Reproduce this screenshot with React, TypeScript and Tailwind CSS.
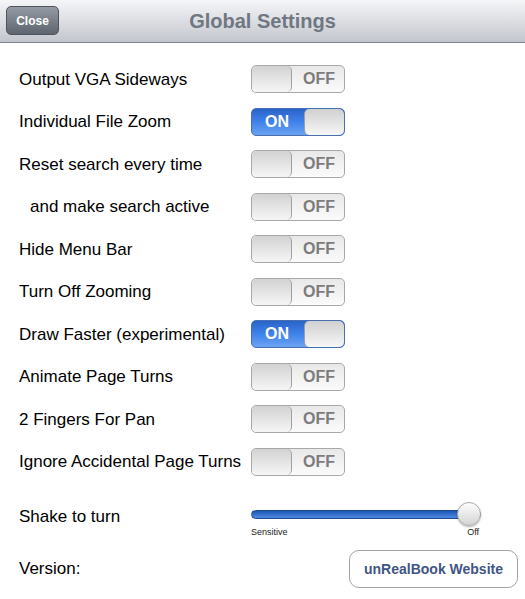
import React from 'react'

const font = { fontFamily: '"Liberation Sans", Arial, Helvetica, sans-serif' }

function Toggle({ on }: { on: boolean }) {
  if (on) {
    return (
      <div className="relative flex h-[28px] w-[94px] overflow-hidden rounded-[5px] border border-[#4a6fb0] bg-gradient-to-b from-[#2a63c8] via-[#3f82ea] to-[#6aa3f2]">
        <div className="flex flex-1 items-center justify-center pr-[2px] text-[16px] font-bold text-white">
          ON
        </div>
        <div className="h-full w-[40px] rounded-[5px] border-l border-[#9aa0a8] bg-gradient-to-b from-[#d0d0d0] to-[#f7f7f7]" />
      </div>
    )
  }
  return (
    <div className="relative flex h-[28px] w-[94px] overflow-hidden rounded-[5px] border border-[#a8a8a8] bg-gradient-to-b from-[#e8e8e8] to-[#fbfbfb]">
      <div className="h-full w-[40px] rounded-[5px] border-r border-[#a0a0a0] bg-gradient-to-b from-[#d2d2d2] to-[#f6f6f6]" />
      <div className="flex flex-1 items-center justify-center pl-[2px] text-[16px] font-bold text-[#7c7c7c]">
        OFF
      </div>
    </div>
  )
}

export default function App() {
  const rows = [
    { label: 'Output VGA Sideways', on: false },
    { label: 'Individual File Zoom', on: true },
    { label: 'Reset search every time', on: false },
    { label: 'and make search active', on: false, indent: true },
    { label: 'Hide Menu Bar', on: false },
    { label: 'Turn Off Zooming', on: false },
    { label: 'Draw Faster (experimental)', on: true },
    { label: 'Animate Page Turns', on: false },
    { label: '2 Fingers For Pan', on: false },
    { label: 'Ignore Accidental Page Turns', on: false },
  ]

  return (
    <div className="h-[599px] w-[525px] overflow-hidden bg-white" style={font}>
      {/* HEADER */}
      <div className="relative flex h-[43px] items-center justify-center border-b border-[#7b8088] bg-gradient-to-b from-[#f5f6f8] to-[#c3c6cd]">
        <button className="absolute left-[6px] top-[6px] flex h-[29px] w-[53px] items-center justify-center rounded-[5px] border border-[#4e545c] bg-gradient-to-b from-[#959ba4] to-[#5e656f] text-[12px] font-bold text-white">
          Close
        </button>
        <h1 className="text-[20px] font-bold text-[#6f7782]">Global Settings</h1>
      </div>

      {/* SWITCH ROWS */}
      <div className="flex flex-col pt-[15px]">
        {rows.map((row) => (
          <div key={row.label} className="flex h-[42.5px] items-center">
            <span
              className={`w-[251px] shrink-0 whitespace-nowrap text-[17px] text-black ${row.indent ? 'pl-[30px]' : 'pl-[19px]'}`}
            >
              {row.label}
            </span>
            <Toggle on={row.on} />
          </div>
        ))}
      </div>

      {/* SLIDER */}
      <div className="mt-[19px] flex h-[40px] items-start">
        <span className="w-[251px] shrink-0 pl-[19px] pt-[2px] text-[17px] text-black">Shake to turn</span>
        <div className="flex w-[230px] flex-col">
          <div className="relative flex h-[24px] items-center">
            <div className="h-[9px] w-full rounded-full border border-[#1f4a8f] bg-gradient-to-b from-[#1a58b8] to-[#4f8ae0]" />
            <div className="absolute right-0 top-0 h-[24px] w-[24px] rounded-full border border-[#a9a9a9] bg-gradient-to-b from-[#fdfdfd] to-[#d4d4d4] shadow-[0_1px_2px_rgba(0,0,0,0.3)]" />
          </div>
          <div className="flex justify-between pr-[2px] text-[9px] text-[#222]">
            <span>Sensitive</span>
            <span>Off</span>
          </div>
        </div>
      </div>

      {/* VERSION */}
      <div className="mt-[8px] flex items-center">
        <span className="w-[349px] shrink-0 pl-[19px] text-[17px] text-black">Version:</span>
        <button className="flex h-[38px] w-[169px] items-center justify-center rounded-[10px] border border-[#a4a4a4] bg-white text-[14px] font-bold text-[#3f5584]">
          unRealBook Website
        </button>
      </div>
    </div>
  )
}
